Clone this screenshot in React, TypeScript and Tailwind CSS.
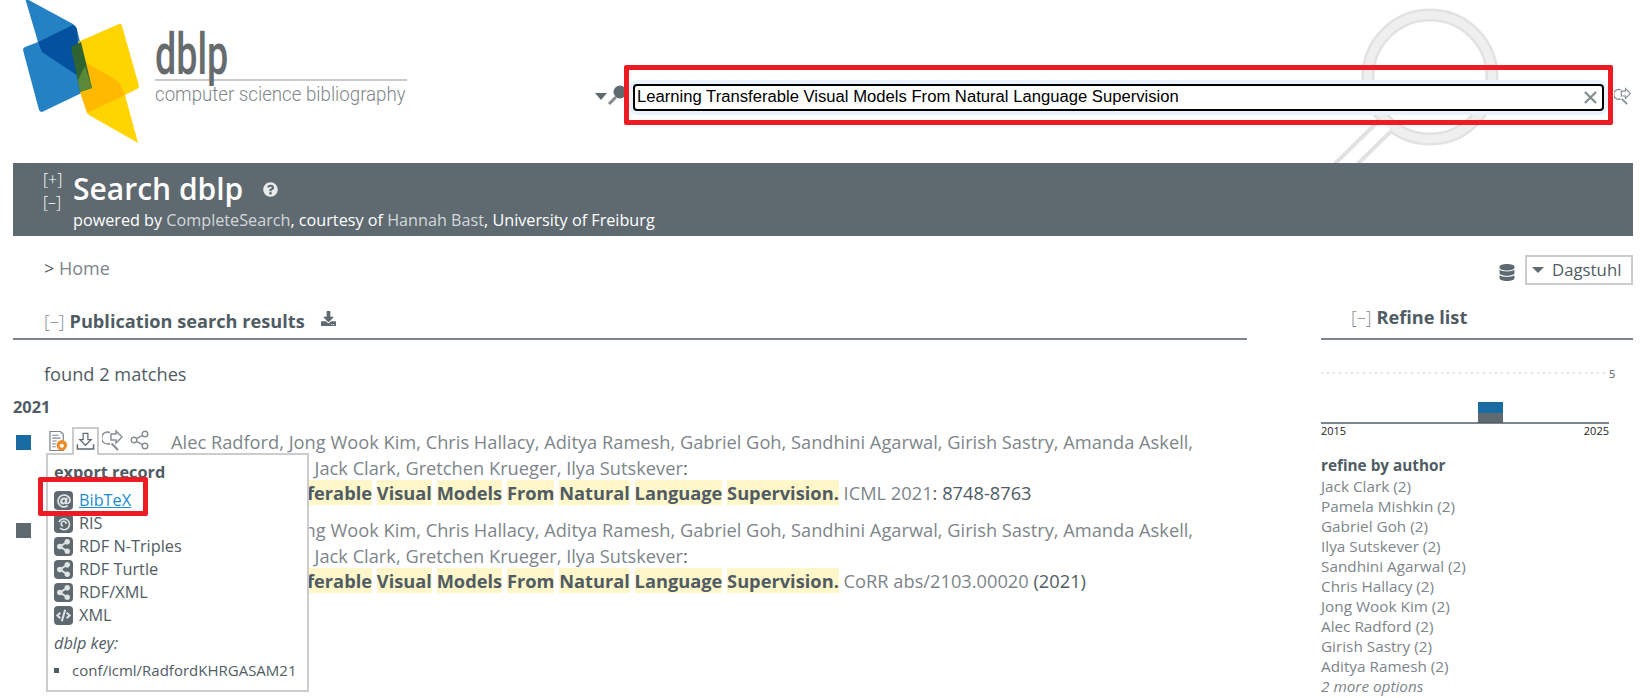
import React from 'react';
import { FaDatabase, FaDownload, FaQuestionCircle, FaAt, FaShareAlt, FaCode } from 'react-icons/fa';

const authorsTop =
  'Alec Radford, Jong Wook Kim, Chris Hallacy, Aditya Ramesh, Gabriel Goh, Sandhini Agarwal, Girish Sastry, Amanda Askell,';

const titleWords = ['Learning', 'Transferable', 'Visual', 'Models', 'From', 'Natural', 'Language', 'Supervision.'];

const refineAuthors = [
  'Jack Clark (2)',
  'Pamela Mishkin (2)',
  'Gabriel Goh (2)',
  'Ilya Sutskever (2)',
  'Sandhini Agarwal (2)',
  'Chris Hallacy (2)',
  'Jong Wook Kim (2)',
  'Alec Radford (2)',
  'Girish Sastry (2)',
  'Aditya Ramesh (2)',
];

const Logo = () => (
  <svg width="145" height="143" viewBox="0 0 145 143" className="shrink-0">
    <path d="M25 -2 L73 24 Q76 26 77 30 L92 88 L42 112 Q40 112 39 110 L23 50 Q23 48 25 47 L38 42 Z" fill="#2481c4" />
    <path d="M71 45 L119 24 Q121 23 122 26 L139 86 Q139 88 137 89 L125 95 L138 143 L89 115 Q87 114 87 112 Z" fill="#ffd400" />
    <path d="M38 42 L73 25 Q76 26 77 30 L81 78 L42 52 Z" fill="#03519f" />
    <path d="M82 60 L116 80 Q120 82 121 86 L125 95 L87 113 L80 92 L92 88 Z" fill="#ffb900" />
    <path d="M71 47 L81 42 L92 88 L80 92 Z" fill="#2f6432" />
    <path d="M85 66 L92 88 L80 92 L78 80 Z" fill="#5a8a38" />
  </svg>
);

const Wordmark = () => (
  <div className="ml-[10px] mt-[30px] w-[252px] text-[#666b6e] font-['Roboto',sans-serif]">
    <div className="h-[49px] text-[58px] leading-[48px] font-medium origin-left scale-x-[0.65]">dblp</div>
    <div className="h-[2px] bg-[#c9c9c9]" />
    <div className="whitespace-nowrap text-[21px] leading-[27px] font-light text-[#80868a] origin-left scale-x-[0.89]">
      computer science bibliography
    </div>
  </div>
);

const SearchForwardIcon = ({ className = '' }: { className?: string }) => (
  <svg viewBox="0 0 22 22" fill="none" stroke="#858d92" strokeWidth="1.4" className={className}>
    <path d="M8 3.5 A6 6 0 1 0 8 14.5" />
    <path d="M9 5 H14 V2 L20 8 L14 14 V11 H9 Z" fill="#fff" />
    <path d="M9.5 14.5 L16 21" strokeWidth="2" />
  </svg>
);

const RecordIcons = ({ open }: { open?: boolean }) => (
  <div className="flex items-start w-[123px] shrink-0">
    <svg viewBox="0 0 20 22" className="w-[19px] h-[22px] mt-[2px] mr-[4px]" fill="none">
      <path d="M1 1 H12 L15 4 V21 H1 Z" fill="#fff" stroke="#7d858a" strokeWidth="1.3" />
      <path d="M3.5 5 H10 M3.5 8 H12 M3.5 11 H8 M3.5 14 H7 M3.5 17 H7" stroke="#7d858a" strokeWidth="1.2" />
      <circle cx="13.5" cy="15.5" r="5.5" fill="#f08a24" />
      <circle cx="13.5" cy="16" r="2.2" fill="#fff" />
    </svg>
    <div
      className={`relative w-[27px] h-[28px] -mt-[1px] border-2 border-b-0 flex justify-center pt-[3px] ${
        open ? 'z-30 border-[#cccccc] bg-white' : 'border-transparent'
      }`}
    >
      <svg viewBox="0 0 20 20" fill="none" stroke="#5f6a70" strokeWidth="1.3" className="w-[19px] h-[19px]">
        <path d="M7.5 1.5 H12.5 V8 H16 L10 14 L4 8 H7.5 Z" />
        <path d="M1.5 13 V18 H18.5 V13" strokeWidth="1.6" />
      </svg>
    </div>
    <SearchForwardIcon className="w-[22px] h-[22px] mt-[1px] ml-[3px]" />
    <svg viewBox="0 0 20 20" fill="none" stroke="#858d92" strokeWidth="1.4" className="w-[20px] h-[20px] mt-[2px] ml-[6px]">
      <circle cx="15" cy="4" r="2.8" />
      <circle cx="4" cy="10" r="2.8" />
      <circle cx="15" cy="16" r="2.8" />
      <path d="M6.5 8.6 L12.5 5.4 M6.5 11.4 L12.5 14.6" />
    </svg>
  </div>
);

const Entry = ({ color, open, venue }: { color: string; open?: boolean; venue: React.ReactNode }) => (
  <div className="flex items-start h-[88px]">
    <div className={`w-[15px] h-[15px] mt-[7px] ml-[3px] mr-[18px] shrink-0 ${color}`} />
    <RecordIcons open={open} />
    <div className="text-[18.25px] leading-[25.5px] mt-[1px] whitespace-nowrap text-[#505c64] -ml-[1px]">
      <div className="text-[#7d858a]">{authorsTop}</div>
      <div className="text-[#7d858a]">
        Pamela Mishkin, Jack Clark, Gretchen Krueger, Ilya Sutskever<span className="text-[#505c64]">:</span>
      </div>
      <div>
        {titleWords.map((word) => (
          <React.Fragment key={word}>
            <b className="font-bold bg-[#fff6c9]">{word}</b>{' '}
          </React.Fragment>
        ))}
        {venue}
      </div>
    </div>
  </div>
);

const ExportTile = ({ children }: { children: React.ReactNode }) => (
  <span className="w-[19px] h-[19px] rounded-[4px] bg-[#5f6a70] text-[#dfe3e5] flex items-center justify-center shrink-0 mr-[6px]">
    {children}
  </span>
);

const ExportRow = ({ label, link, children }: { label: string; link?: boolean; children: React.ReactNode }) => (
  <div className="flex items-center h-[23px]">
    <ExportTile>{children}</ExportTile>
    <span className={link ? 'text-[#1d8ccd] underline' : ''}>{label}</span>
  </div>
);

const ExportPopup = () => (
  <div className="absolute left-[46px] top-[453px] z-20 w-[263px] h-[239px] border-2 border-[#cccccc] bg-white pl-[6px] pt-[5px] text-[16.3px] text-[#505c64]">
    <div className="font-bold leading-[25px] mb-[4px]">export record</div>
    <ExportRow label="BibTeX" link>
      <FaAt className="w-[14px] h-[14px]" />
    </ExportRow>
    <ExportRow label="RIS">
      <svg viewBox="0 0 14 14" fill="none" stroke="currentColor" strokeWidth="1.6" className="w-[14px] h-[14px]">
        <path d="M2 5 A5.5 5.5 0 1 1 3 11 M9 7 A2.4 2.4 0 1 0 6 9" />
      </svg>
    </ExportRow>
    <ExportRow label="RDF N-Triples">
      <FaShareAlt className="w-[15px] h-[15px]" />
    </ExportRow>
    <ExportRow label="RDF Turtle">
      <FaShareAlt className="w-[15px] h-[15px]" />
    </ExportRow>
    <ExportRow label="RDF/XML">
      <FaShareAlt className="w-[15px] h-[15px]" />
    </ExportRow>
    <ExportRow label="XML">
      <FaCode className="w-[15px] h-[15px]" />
    </ExportRow>
    <div className="italic leading-[24px] mt-[4px]">dblp key:</div>
    <div className="flex items-center text-[15px] leading-[22px] mt-[4px]">
      <span className="w-[5px] h-[5px] bg-[#505c64] mr-[13px]" />
      conf/icml/RadfordKHRGASAM21
    </div>
  </div>
);

const Chart = () => (
  <svg width="312" height="72" viewBox="0 0 312 72" className="block">
    <line x1="0" y1="7" x2="288" y2="7" stroke="#c8c8c8" strokeDasharray="2 4" />
    <text x="288" y="12" fontSize="11" fill="#505c64">5</text>
    <rect x="157" y="36" width="25" height="11" fill="#196ca3" />
    <rect x="157" y="47" width="25" height="10" fill="#5f6a70" />
    <line x1="0" y1="57" x2="288" y2="57" stroke="#505c64" strokeWidth="1.5" />
    <text x="0" y="69" fontSize="11" fill="#222">2015</text>
    <text x="288" y="69" fontSize="11" fill="#222" textAnchor="end">2025</text>
  </svg>
);

const App: React.FC = () => {
  return (
    <div className="relative w-[1649px] h-[698px] overflow-hidden bg-white text-[#505c64] font-['Open_Sans',sans-serif]">
      {/* watermark behind the search box */}
      <svg width="220" height="165" viewBox="0 0 220 165" className="absolute left-[1290px] top-0 pointer-events-none">
        <circle cx="140" cy="77" r="62" fill="none" stroke="#e2e2e2" strokeWidth="13" />
        <circle cx="140" cy="77" r="62" fill="none" stroke="#efefef" strokeWidth="8" />
        <path d="M96 125 L50 170" stroke="#e2e2e2" strokeWidth="20" fill="none" />
        <path d="M96 125 L50 170" stroke="#fff" strokeWidth="12" fill="none" />
      </svg>

      <header className="relative flex h-[163px]">
        <Logo />
        <Wordmark />
        <div className="flex items-start pt-[84px] ml-[188px]">
          <span className="w-0 h-0 mt-[9px] border-x-[6px] border-t-[7px] border-x-transparent border-t-[#5f6a70]" />
          <svg viewBox="0 0 20 20" className="w-[20px] h-[20px] mt-[1px]">
            <circle cx="13" cy="7" r="6.5" fill="#5f6a70" />
            <path d="M9 12 L2 19" stroke="#858d92" strokeWidth="3" />
          </svg>
          <div className="relative ml-[6px] w-[971px] h-[27px] rounded-[4px] border-2 border-black bg-white shadow-[0_0_0_4px_#eaf3fb] flex items-center pl-[2px] font-['Liberation_Sans',sans-serif] text-[16.65px] text-black whitespace-nowrap">
            Learning Transferable Visual Models From Natural Language Supervision
            <svg viewBox="0 0 14 14" stroke="#858d92" strokeWidth="2.4" className="absolute right-[5px] top-[5px] w-[13px] h-[13px]">
              <path d="M1 1 L13 13 M13 1 L1 13" />
            </svg>
          </div>
          <SearchForwardIcon className="w-[18px] h-[20px] ml-[10px] mt-[2px]" />
        </div>
      </header>

      <section className="relative mx-[13px] w-[1620px] h-[73px] bg-[#5f6a70] text-white flex">
        <div className="w-[60px] pl-[30px] pt-[5px] text-[16px] leading-[23px] font-light">
          <div>[+]</div>
          <div>[–]</div>
        </div>
        <div>
          <h1 className="flex items-center text-[30px] leading-[34px] font-semibold mt-[9px]">
            Search dblp
            <FaQuestionCircle className="w-[15px] h-[15px] ml-[20px] text-[#e8eaeb]" />
          </h1>
          <p className="text-[16.2px] leading-[20px] mt-[4px]">
            powered by <span className="text-[#d3d8db]">CompleteSearch</span>, courtesy of{' '}
            <span className="text-[#d3d8db]">Hannah Bast</span>, University of Freiburg
          </p>
        </div>
      </section>

      <div className="flex items-start justify-between h-[53px] pl-[44px] pr-[16px] pt-[20px]">
        <div className="text-[18px] leading-[24px]">
          &gt; <span className="text-[#7d858a]">Home</span>
        </div>
        <div className="flex items-center -mt-[1px]">
          <FaDatabase className="w-[16px] h-[17px] text-[#5f6a70] mr-[10px] mt-[5px]" />
          <div className="flex items-center w-[108px] h-[30px] border-2 border-[#cccccc] pl-[5px] text-[16.8px]">
            <span className="w-0 h-0 border-x-[6px] border-t-[6px] border-x-transparent border-t-[#5f6a70] mr-[8px]" />
            Dagstuhl
          </div>
        </div>
      </div>

      <main className="flex pl-[13px]">
        <div className="w-[1234px] shrink-0">
          <div className="flex items-end h-[51px] pl-[31px] pb-[3px] border-b-2 border-[#7d858a]">
            <span className="text-[#8a9095] font-light text-[18px] mr-[5px]">[–]</span>
            <b className="text-[18.2px] font-bold">Publication search results</b>
            <FaDownload className="w-[15px] h-[15px] ml-[16px] mb-[9px] text-[#5f6a70]" />
          </div>
          <div className="pl-[31px] pt-[22px] text-[18.2px] leading-[24px]">found 2 matches</div>
          <div className="pt-[9px] text-[16.4px] leading-[24px] font-bold">2021</div>
          <div className="pt-[9px]">
            <Entry
              color="bg-[#196ca3]"
              open
              venue={
                <>
                  <span className="text-[#7d858a]">ICML 2021</span>: 8748-8763
                </>
              }
            />
            <Entry
              color="bg-[#5f6a70]"
              venue={
                <>
                  <span className="text-[#7d858a]">CoRR abs/2103.00020</span> (2021)
                </>
              }
            />
          </div>
        </div>

        <aside className="ml-[74px] w-[312px] shrink-0 -mt-[3px]">
          <div className="flex items-end h-[54px] pl-[30px] pb-[7px] border-b-2 border-[#7d858a]">
            <span className="text-[#8a9095] font-light text-[18px] mr-[5px]">[–]</span>
            <b className="text-[18.2px] font-bold">Refine list</b>
          </div>
          <div className="pt-[26px]">
            <Chart />
          </div>
          <div className="pt-[17px] text-[15.3px]">
            <div className="font-bold leading-[21px]">refine by author</div>
            {refineAuthors.map((name) => (
              <div key={name} className="leading-[20px] text-[#7d858a]">
                {name}
              </div>
            ))}
            <div className="leading-[20px] italic text-[#7d858a]">2 more options</div>
          </div>
        </aside>
      </main>

      <ExportPopup />

      {/* red annotation boxes */}
      <div className="absolute left-[624px] top-[65px] w-[989px] h-[60px] border-[5px] border-[#ed1c24] rounded-[2px] pointer-events-none z-40" />
      <div className="absolute left-[38px] top-[477px] w-[110px] h-[39px] border-[5px] border-[#ed1c24] rounded-[2px] pointer-events-none z-40" />
    </div>
  );
};

export default App;
